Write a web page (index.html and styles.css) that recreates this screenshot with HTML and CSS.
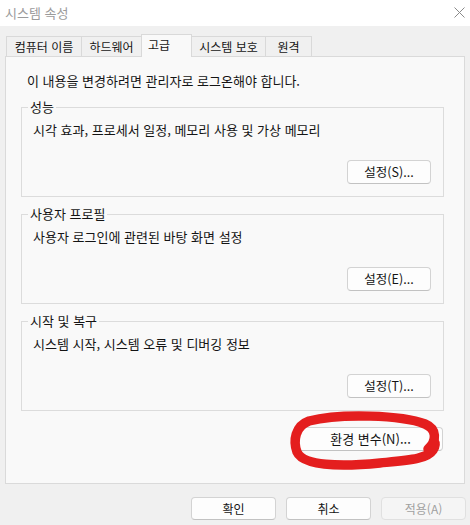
FILE: index.html
```html
<!DOCTYPE html>
<html lang="ko">
<head>
<meta charset="utf-8">
<title>시스템 속성</title>
<link rel="stylesheet" href="styles.css">
</head>
<body>
<div class="window">
  <div class="titlebar">
    <span class="title">시스템 속성</span>
    <svg class="close" width="11" height="11" viewBox="0 0 11 11"><path d="M0.5 0.5 L10.5 10.5 M10.5 0.5 L0.5 10.5" stroke="#8a8a8a" stroke-width="1" fill="none"/></svg>
  </div>
  <div class="tabs">
    <div class="tab t1">컴퓨터 이름</div>
    <div class="tab t2">하드웨어</div>
    <div class="tab t3 active">고급</div>
    <div class="tab t4">시스템 보호</div>
    <div class="tab t5">원격</div>
  </div>
  <div class="panel">
    <p class="intro">이 내용을 변경하려면 관리자로 로그온해야 합니다.</p>
    <fieldset class="group">
      <legend>성능</legend>
      <p class="desc">시각 효과, 프로세서 일정, 메모리 사용 및 가상 메모리</p>
      <div class="row"><button class="btn set">설정(S)...</button></div>
    </fieldset>
    <fieldset class="group">
      <legend>사용자 프로필</legend>
      <p class="desc">사용자 로그인에 관련된 바탕 화면 설정</p>
      <div class="row"><button class="btn set">설정(E)...</button></div>
    </fieldset>
    <fieldset class="group">
      <legend>시작 및 복구</legend>
      <p class="desc">시스템 시작, 시스템 오류 및 디버깅 정보</p>
      <div class="row"><button class="btn set">설정(T)...</button></div>
    </fieldset>
    <div class="env-row"><button class="btn env">환경 변수(N)...</button></div>
  </div>
  <div class="footer">
    <button class="btn foot">확인</button>
    <button class="btn foot">취소</button>
    <button class="btn foot" disabled>적용(A)</button>
  </div>
  <svg class="annot" width="470" height="525" viewBox="0 0 470 525">
    <path d="M428 449 C437 441 437 429 425 424 C402 415 340 413 309 421 C295 426 293 441 297 452 C303 466 340 467 380 463 C410 460 427 459 433 450 C435 447 436 444 434 441" fill="none" stroke="#e41e1e" stroke-width="9.5" stroke-linecap="round" stroke-linejoin="round"/>
  </svg>
</div>
</body>
</html>
```

FILE: styles.css
```css
html, body {
  margin: 0;
  padding: 0;
}
body {
  background: #f0f0f0;
  font-family: "Noto Sans CJK KR", "Noto Sans", sans-serif;
  font-size: 13px;
  color: #141414;
}
.window {
  position: relative;
  width: 470px;
  height: 525px;
  overflow: hidden;
}
.titlebar {
  height: 26px;
  background: #ffffff;
  display: flex;
  align-items: center;
  justify-content: space-between;
  padding: 0 5px 0 5px;
  box-sizing: border-box;
}
.title {
  color: #9b9b9b;
  font-size: 13px;
  line-height: 16px;
}
.close {
  display: block;
  margin-top: -1px;
}
.tabs {
  display: flex;
  align-items: flex-end;
  margin: 8px 0 0 6px;
  position: relative;
  z-index: 2;
  font-size: 12px;
}
.tab {
  box-sizing: border-box;
  height: 20px;
  border: 1px solid #d9d9d9;
  border-bottom: none;
  background: #f0f0f0;
  margin-right: -1px;
  display: flex;
  align-items: center;
  justify-content: center;
  line-height: 16px;
}
.t1 { width: 76px; }
.t2 { width: 61px; }
.t3 { width: 51px; }
.t4 { width: 75px; }
.t5 { width: 47px; }
.tab.active {
  height: 23px;
  margin-bottom: -1px;
  background: #f9f9f9;
  padding-bottom: 2px;
  justify-content: flex-start;
  padding-left: 6px;
}
.panel {
  position: relative;
  z-index: 1;
  box-sizing: border-box;
  width: 460px;
  margin-left: 5px;
  border: 1px solid #dadada;
  background: #f9f9f9;
  padding: 16px 20px 32px 15px;
}
.intro {
  margin: 0 0 10px 0;
  padding-left: 6px;
  line-height: 16px;
}
.group {
  margin: 0 0 9px 0;
  padding: 7px 12px 12px 11px;
  border: 1px solid #dcdcdc;
  min-width: 0;
}
.group legend {
  padding: 0 2px;
  margin-left: -5px;
  line-height: 16px;
}
.desc {
  margin: 0 0 22px 0;
  line-height: 16px;
}
.row {
  display: flex;
  justify-content: flex-end;
}
.btn {
  box-sizing: border-box;
  font-family: inherit;
  color: #141414;
  background: #fdfdfd;
  border: 1px solid #d3d3d3;
  border-bottom-color: #c2c2c2;
  border-radius: 4px;
  padding: 0;
  line-height: 16px;
}
.set {
  width: 84px;
  height: 24px;
  font-size: 12.5px;
}
.env-row {
  display: flex;
  justify-content: flex-end;
  margin-top: 16px;
  padding-right: 1px;
}
.env {
  width: 145px;
  height: 24px;
  font-size: 13px;
}
.footer {
  display: flex;
  justify-content: flex-end;
  gap: 10px;
  margin-top: 13px;
  padding-right: 4px;
}
.foot {
  width: 85px;
  height: 23px;
  font-size: 12px;
}
.foot:disabled {
  color: #a0a0a0;
  background: #f5f5f5;
  border-color: #e0e0e0;
}
.annot {
  position: absolute;
  left: 0;
  top: 0;
  z-index: 5;
  pointer-events: none;
}
```
